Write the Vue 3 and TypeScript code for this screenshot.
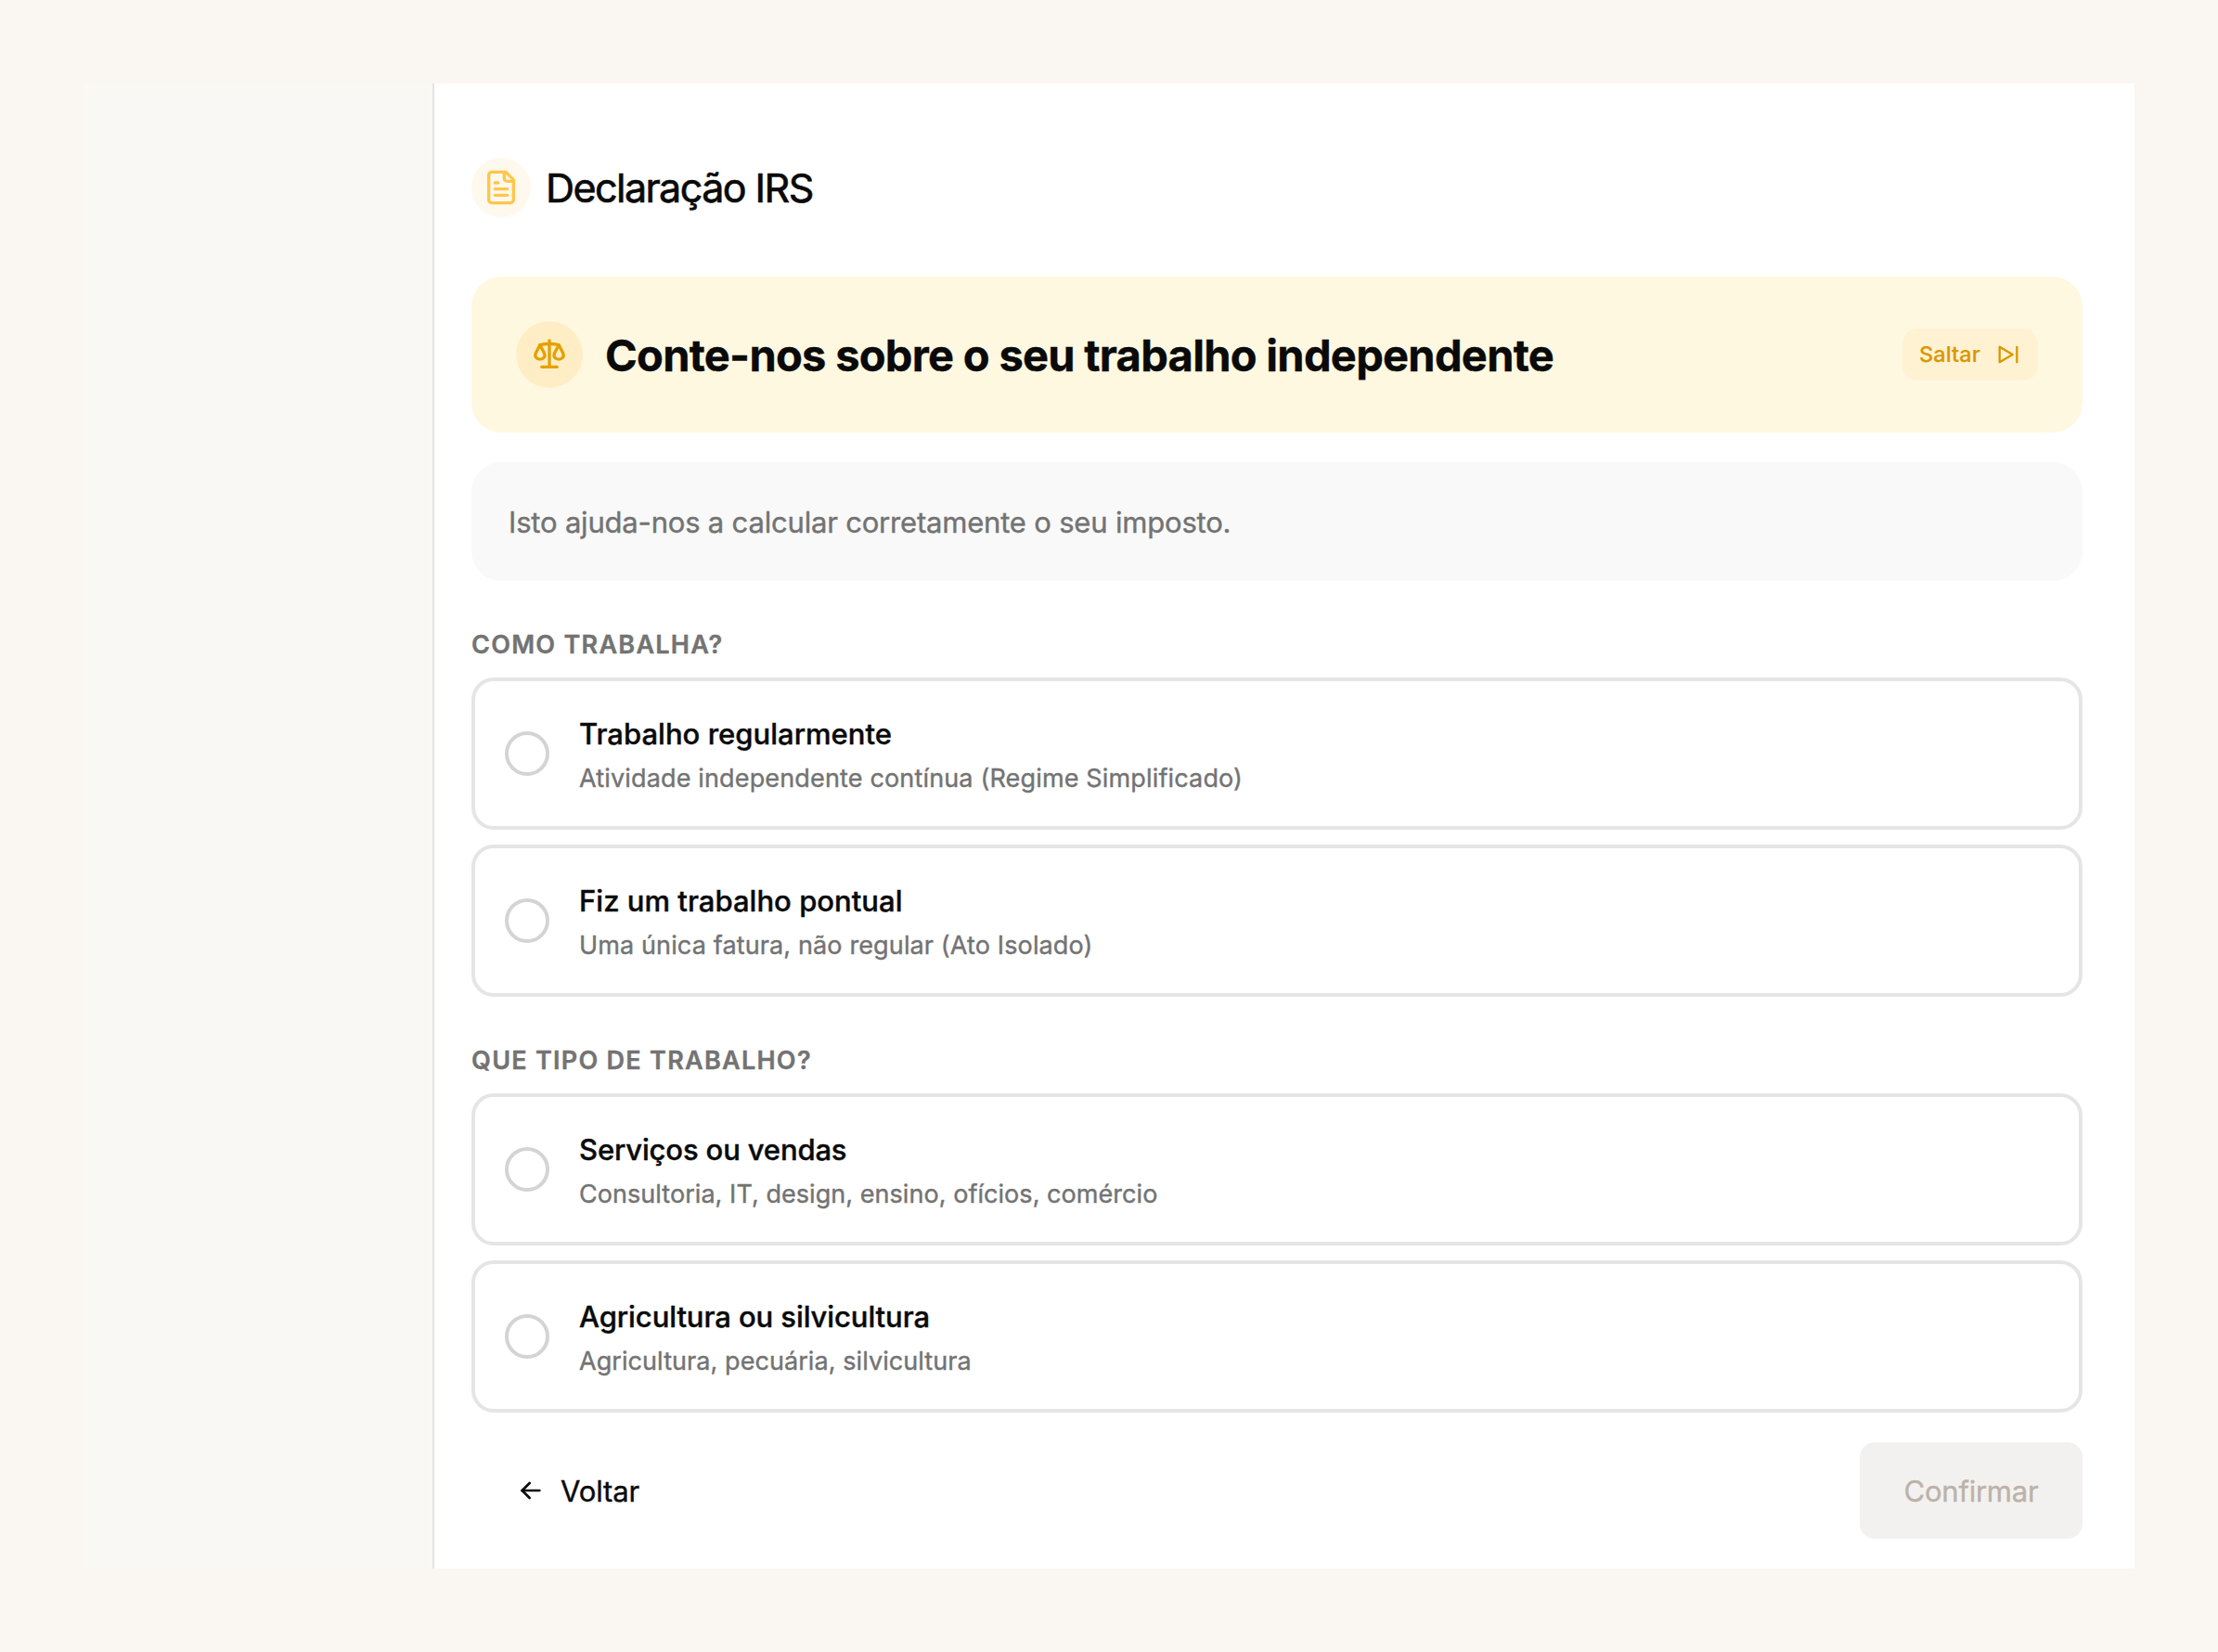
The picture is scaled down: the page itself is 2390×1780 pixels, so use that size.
<script setup lang="ts">
interface Option {
  title: string
  hint: string
  titleTracking: string
  hintTracking: string
}

interface Question {
  label: string
  options: Option[]
}

const questions: Question[] = [
  {
    label: 'Como trabalha?',
    options: [
      {
        title: 'Trabalho regularmente',
        hint: 'Atividade independente contínua (Regime Simplificado)',
        titleTracking: '0.02px',
        hintTracking: '0.155px',
      },
      {
        title: 'Fiz um trabalho pontual',
        hint: 'Uma única fatura, não regular (Ato Isolado)',
        titleTracking: '0.03px',
        hintTracking: '0.13px',
      },
    ],
  },
  {
    label: 'Que tipo de trabalho?',
    options: [
      {
        title: 'Serviços ou vendas',
        hint: 'Consultoria, IT, design, ensino, ofícios, comércio',
        titleTracking: '-0.15px',
        hintTracking: '0.05px',
      },
      {
        title: 'Agricultura ou silvicultura',
        hint: 'Agricultura, pecuária, silvicultura',
        titleTracking: '-0.08px',
        hintTracking: '0.07px',
      },
    ],
  },
]
</script>

<template>
  <div class="page">
    <div class="frame">
      <aside class="sidebar"></aside>
      <main class="content">
        <header class="header">
          <span class="header-icon">
            <svg width="40" height="40" viewBox="0 0 24 24" fill="none" stroke="currentColor" stroke-width="2" stroke-linecap="round" stroke-linejoin="round">
              <path d="M15 2H6a2 2 0 0 0-2 2v16a2 2 0 0 0 2 2h12a2 2 0 0 0 2-2V7Z" />
              <path d="M14 2v4a2 2 0 0 0 2 2h4" />
              <path d="M10 9H8" />
              <path d="M16 13H8" />
              <path d="M16 17H8" />
            </svg>
          </span>
          <h1 class="title">Declaração IRS</h1>
        </header>

        <section class="banner">
          <span class="banner-icon">
            <svg width="40" height="40" viewBox="0 0 40 40" fill="none" stroke="currentColor" stroke-width="3.3" stroke-linecap="round" stroke-linejoin="round">
              <path d="M20 4.8V33.3" />
              <path d="M11.8 33.3H28.2" />
              <path d="M9.8 9.7C12.6 8.8 16 8.5 20 8.5s7.4.3 10.2 1.2" />
              <path d="M9.8 9.7L5.3 18.6C3.6 22.4 6.4 25.1 9.9 25.1s6.3-2.7 4.6-6.5Z" />
              <path d="M30.2 9.7l4.5 8.9c1.7 3.8-1.1 6.5-4.6 6.5s-6.3-2.7-4.6-6.5Z" />
            </svg>
          </span>
          <h2 class="banner-title">Conte-nos sobre o seu trabalho independente</h2>
          <button class="skip" type="button">
            <span class="skip-text">Saltar</span>
            <svg width="28" height="28" viewBox="0 0 24 24" fill="none" stroke="currentColor" stroke-width="2" stroke-linecap="round" stroke-linejoin="round">
              <path d="M4 5v14l12-7z" />
              <path d="M20 5v14" />
            </svg>
          </button>
        </section>

        <p class="note">Isto ajuda-nos a calcular corretamente o seu imposto.</p>

        <section v-for="question in questions" :key="question.label" class="question">
          <h3 class="label">{{ question.label }}</h3>
          <div class="options">
            <div v-for="option in question.options" :key="option.title" class="option">
              <span class="radio"></span>
              <div class="option-text">
                <span class="option-title" :style="{ letterSpacing: option.titleTracking }">{{ option.title }}</span>
                <span class="option-hint" :style="{ letterSpacing: option.hintTracking }">{{ option.hint }}</span>
              </div>
            </div>
          </div>
        </section>

        <footer class="footer">
          <button class="back" type="button">
            <svg width="32" height="32" viewBox="0 0 24 24" fill="none" stroke="currentColor" stroke-width="2" stroke-linecap="round" stroke-linejoin="round">
              <path d="M5 12h14" />
              <path d="M5 12l6 6" />
              <path d="M5 12l6-6" />
            </svg>
            <span class="back-text">Voltar</span>
          </button>
          <button class="confirm" type="button" disabled>Confirmar</button>
        </footer>
      </main>
    </div>
  </div>
</template>

<style>
body {
  background: #faf6f1;
}
</style>

<style scoped>
.page {
  box-sizing: border-box;
  width: 2390px;
  height: 1780px;
  padding: 90px;
  background: #faf6f1;
  color: #0a0a0a;
  font-family: Inter, "Liberation Sans", sans-serif;
  -webkit-text-stroke: 0.4px currentColor;
}

.frame {
  display: flex;
  height: 1600px;
}

.sidebar {
  box-sizing: border-box;
  width: 378px;
  background: #f9f8f4;
  border-right: 2px solid #e3e4df;
}

.content {
  box-sizing: border-box;
  flex: 1;
  display: flex;
  flex-direction: column;
  padding: 80px 56px 32px 40px;
  background: #fff;
}

h1,
h2,
h3,
p {
  margin: 0;
}

svg {
  display: block;
  flex: none;
}

button {
  margin: 0;
  border: 0;
  background: none;
  font-family: inherit;
}

.header {
  display: flex;
  align-items: center;
  gap: 16px;
  margin-bottom: 64px;
}

.header-icon {
  display: flex;
  align-items: center;
  justify-content: center;
  width: 64px;
  height: 64px;
  border-radius: 50%;
  background: #fff8ec;
  color: #ffc64a;
}

.title {
  font-size: 43px;
  font-weight: 400;
  line-height: 64px;
  letter-spacing: -1.55px;
  -webkit-text-stroke-width: 0.7px;
}

.banner {
  box-sizing: border-box;
  display: flex;
  align-items: center;
  height: 168px;
  padding: 0 48px;
  border-radius: 32px;
  background: #fff8e1;
}

.banner-icon {
  display: flex;
  align-items: center;
  justify-content: center;
  width: 72px;
  height: 72px;
  margin-right: 24px;
  border-radius: 50%;
  background: #ffeec5;
  color: #e5a000;
}

.banner-title {
  flex: 1;
  padding-top: 2px;
  font-size: 47px;
  font-weight: 700;
  line-height: 60px;
  letter-spacing: -0.7px;
}

.skip {
  box-sizing: border-box;
  display: flex;
  align-items: center;
  justify-content: space-between;
  width: 146px;
  height: 56px;
  padding: 0 18px;
  border-radius: 16px;
  background: #fef2d3;
  color: #d99700;
  font-size: 23.5px;
  font-weight: 500;
  letter-spacing: 0.09px;
  -webkit-text-stroke-width: 0.2px;
}

.skip-text {
  padding-bottom: 2px;
}

.note {
  margin-top: 32px;
  padding: 41px 40px 39px;
  border-radius: 32px;
  background: #f9f9f9;
  color: #737373;
  font-size: 31px;
  line-height: 48px;
  letter-spacing: -0.19px;
}

.question {
  margin-top: 48px;
}

.label {
  margin-bottom: 15px;
  padding-top: 1px;
  color: #737373;
  font-size: 27px;
  font-weight: 600;
  line-height: 40px;
  letter-spacing: 1.27px;
  text-transform: uppercase;
}

.options {
  display: flex;
  flex-direction: column;
  gap: 16px;
}

.option {
  display: flex;
  align-items: center;
  gap: 32px;
  padding: 32px;
  border: 4px solid #e5e5e5;
  border-radius: 24px;
}

.radio {
  box-sizing: border-box;
  width: 48px;
  height: 48px;
  border: 4px solid #d4d4d4;
  border-radius: 50%;
}

.option-text {
  display: flex;
  flex-direction: column;
  gap: 4px;
  margin: 1px 0 -1px;
}

.option-title {
  font-size: 31px;
  font-weight: 500;
  line-height: 48px;
}

.option-hint {
  color: #737373;
  font-size: 27px;
  line-height: 40px;
}

.footer {
  display: flex;
  align-items: center;
  justify-content: space-between;
  margin-top: 32px;
}

.back {
  display: flex;
  align-items: center;
  gap: 16px;
  height: 104px;
  padding: 0 48px;
  color: #0a0a0a;
  font-size: 31px;
  line-height: 40px;
  letter-spacing: -0.1px;
}

.back-text {
  padding-top: 2px;
}

.confirm {
  width: 240px;
  height: 104px;
  padding: 0;
  border-radius: 16px;
  background: #f3f1f0;
  color: #bcb2aa;
  font-size: 31px;
  letter-spacing: -0.24px;
}
</style>
